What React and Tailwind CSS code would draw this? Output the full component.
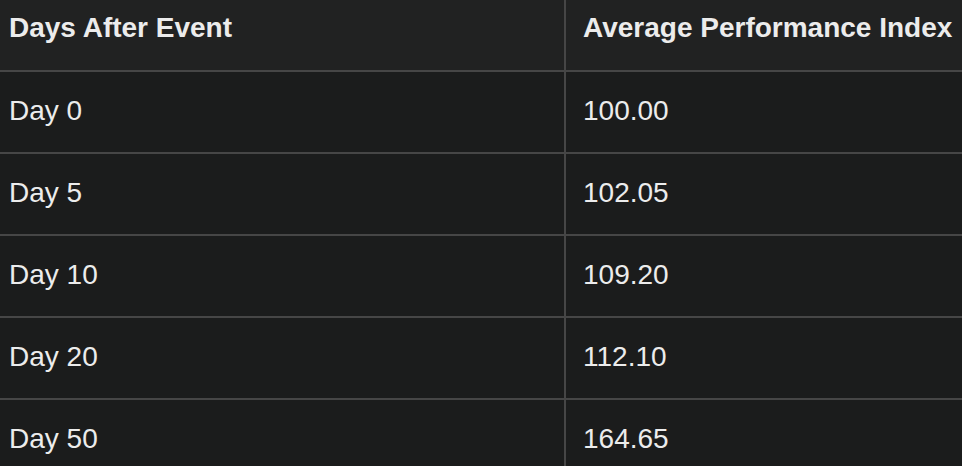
const ROWS = [
  ['Day 0', '100.00'],
  ['Day 5', '102.05'],
  ['Day 10', '109.20'],
  ['Day 20', '112.10'],
  ['Day 50', '164.65'],
]

export default function App() {
  return (
    <div
      className="w-[962px] h-[466px] overflow-hidden bg-[#1b1c1c] text-[#ececec] text-[28px] leading-[34px]"
      style={{ fontFamily: '"Liberation Sans", Arial, sans-serif' }}
    >
      <div className="grid grid-cols-[566px_1fr] h-[72px] bg-[#212222] border-b-2 border-[#464646] font-bold">
        <div className="pl-[9px] pt-[11px] border-r-2 border-[#464646]">Days After Event</div>
        <div className="pl-[17px] pt-[11px] whitespace-nowrap">Average Performance Index</div>
      </div>
      {ROWS.map(([day, val]) => (
        <div key={day} className="grid grid-cols-[566px_1fr] h-[82px] border-b-2 border-[#464646]">
          <div className="pl-[9px] pb-[3px] flex items-center border-r-2 border-[#464646]">{day}</div>
          <div className="pl-[17px] pb-[3px] flex items-center">{val}</div>
        </div>
      ))}
    </div>
  )
}
